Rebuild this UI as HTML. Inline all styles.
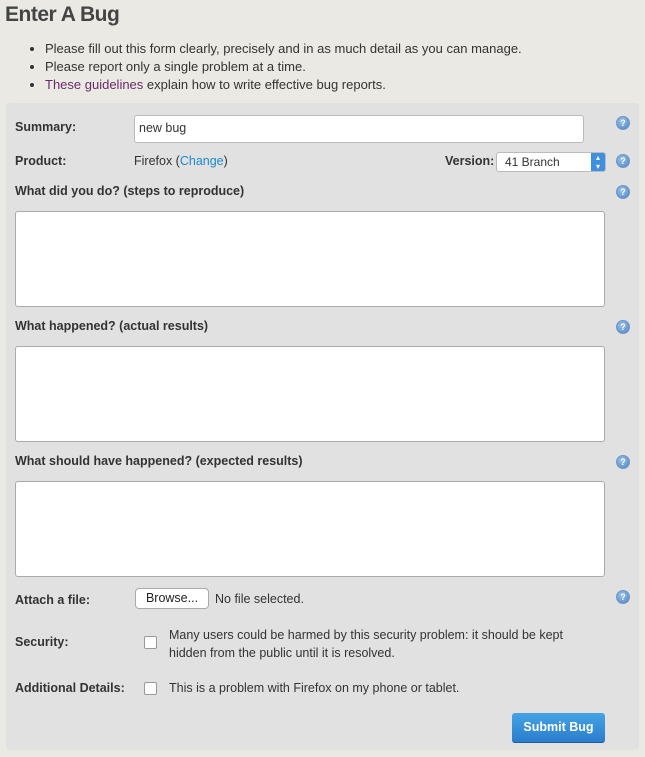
<!DOCTYPE html>
<html><head><meta charset="utf-8"><style>
body{margin:0;width:645px;height:757px;background:#ebe9e3;font-family:"Liberation Sans",sans-serif;color:#333;position:relative;overflow:hidden}
.a{position:absolute;white-space:nowrap}
h1{position:absolute;left:5px;top:3px;margin:0;font-size:21px;font-weight:bold;color:#444;letter-spacing:-0.5px}
ul{position:absolute;left:28px;top:40px;margin:0;padding:0 0 0 17px;font-size:13px;line-height:18px;color:#333}
.panel{position:absolute;left:6px;top:103px;width:633px;height:647px;background:#e1e1e1;border-radius:4px}
.l{font-weight:bold;font-size:12.5px;color:#333}
.t{font-size:12.5px;color:#333}
.ta{position:absolute;left:15px;width:588px;height:94px;background:#fff;border:1px solid #aaa;border-radius:3px}
.h{position:absolute;left:616px;width:12px;height:12px;border-radius:50%;background:radial-gradient(circle at 40% 35%,#9cc3ea,#4a82c4);color:#fff;font-size:9px;font-weight:bold;text-align:center;line-height:12px;border:1px solid #6f97c6}
.cb{position:absolute;left:144px;width:11px;height:11px;background:#fff;border:1px solid #999;border-radius:2px}
</style></head><body>
<h1>Enter A Bug</h1>
<ul><li>Please fill out this form clearly, precisely and in as much detail as you can manage.</li><li>Please report only a single problem at a time.</li><li><span style="color:#6b2a6b">These guidelines</span> explain how to write effective bug reports.</li></ul>
<div class="panel"></div>
<div class="a l" style="left:15px;top:120px">Summary:</div>
<div class="a" style="left:134px;top:115px;width:448px;height:26px;background:#fff;border:1px solid #bbb;border-radius:3px"></div>
<div class="a t" style="left:139px;top:121px">new bug</div>
<div class="h" style="top:116px">?</div>
<div class="a l" style="left:15px;top:154px">Product:</div>
<div class="a t" style="left:134px;top:154px">Firefox (<span style="color:#1a8ad0">Change</span>)</div>
<div class="a l" style="left:445px;top:154px">Version:</div>
<div class="a" style="left:496px;top:152px;width:108px;height:18px;background:#fff;border:1px solid #bbb;border-radius:3px;overflow:hidden"><span class="t" style="position:absolute;left:8px;top:2px;font-size:12px">41 Branch</span><div style="position:absolute;right:0;top:0;width:14px;height:18px;background:#3d8fe0;color:#fff;font-size:8px;text-align:center;line-height:9px">▴<br>▾</div></div>
<div class="h" style="top:154px">?</div>
<div class="a l" style="left:15px;top:184px">What did you do? (steps to reproduce)</div>
<div class="h" style="top:185px">?</div>
<div class="ta" style="top:211px"></div>
<div class="a l" style="left:15px;top:319px">What happened? (actual results)</div>
<div class="h" style="top:320px">?</div>
<div class="ta" style="top:346px"></div>
<div class="a l" style="left:15px;top:454px">What should have happened? (expected results)</div>
<div class="h" style="top:455px">?</div>
<div class="ta" style="top:481px"></div>
<div class="a l" style="left:15px;top:593px">Attach a file:</div>
<div class="a" style="left:135px;top:588px;width:72px;height:19px;background:#fff;border:1px solid #aaa;border-radius:4px;font-size:12.5px;text-align:center;line-height:19px;color:#222">Browse...</div>
<div class="a t" style="left:215px;top:592px">No file selected.</div>
<div class="h" style="top:590px">?</div>
<div class="a l" style="left:15px;top:635px">Security:</div>
<div class="cb" style="top:636px"></div>
<div class="a t" style="left:169px;top:626px;line-height:18px">Many users could be harmed by this security problem: it should be kept<br>hidden from the public until it is resolved.</div>
<div class="a l" style="left:15px;top:681px">Additional Details:</div>
<div class="cb" style="top:682px"></div>
<div class="a t" style="left:169px;top:681px">This is a problem with Firefox on my phone or tablet.</div>
<div class="a" style="left:512px;top:713px;width:93px;height:29px;background:linear-gradient(#45a3e5,#2b7dcc);border-radius:3px;border-bottom:1px solid #1f5f9e;color:#fff;font-weight:bold;font-size:12.5px;text-align:center;line-height:29px">Submit Bug</div>
</body></html>
